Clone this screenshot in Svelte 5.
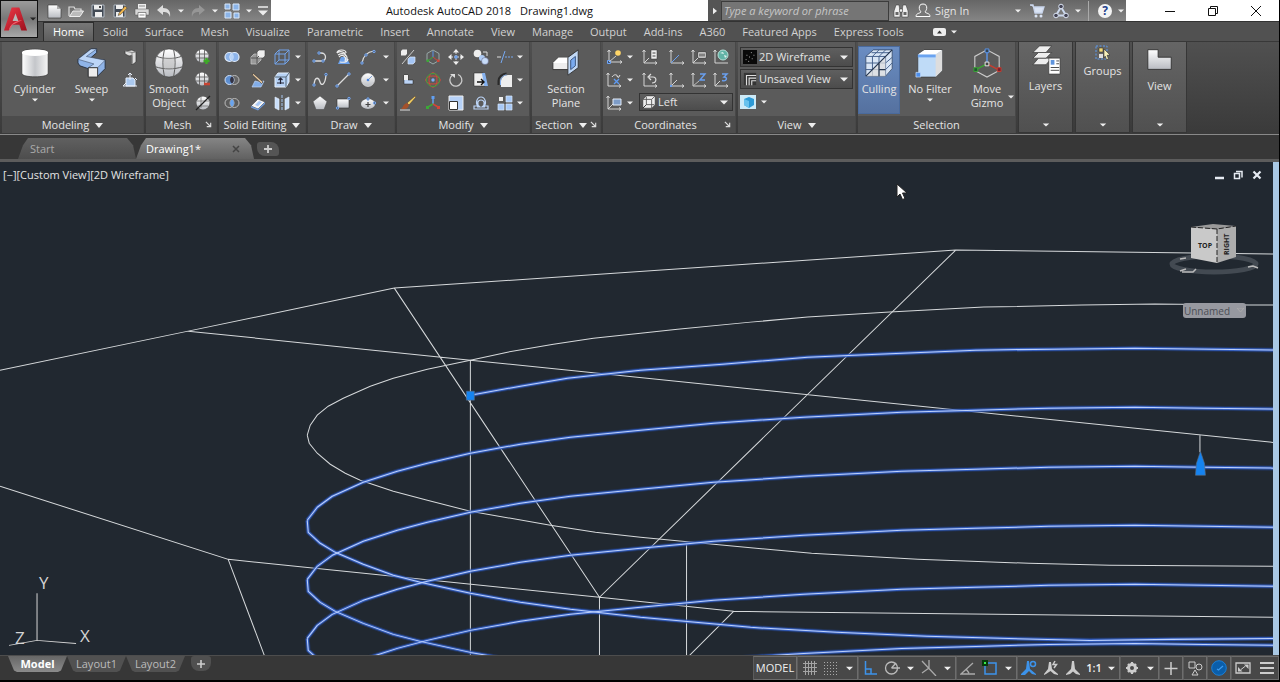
<script lang="ts">
	const glyphs: Record<string, string> = {
		// quick access
		new: '<path d="M2 2h9l4 4v9H2z" fill="url(#metal)" stroke="#333" stroke-width=".6"/><path d="M11 2v4h4" fill="#aaa"/>',
		open: '<path d="M1 13V4h5l1 2h6v2" fill="none" stroke="#ddd" stroke-width="1.2"/><path d="M1.500 13.500L5 8h10.500l-3.500 5.500z" fill="#bbb" stroke="#eee"/>',
		save: '<path d="M2 2h12v12H2z" fill="#424a55" stroke="#aeb6c0"/><path d="M4 2h8v4.500H4zM5 9h7v5H5z" fill="#eee"/><path d="M9 3h2v2H9z" fill="#444"/>',
		saveas: '<path d="M2 2h11v12H2z" fill="#424a55" stroke="#aeb6c0"/><path d="M4 2h7v4H4zM4 9h7v5H4z" fill="#eee"/><path d="M7 10l6-7 2.200 2-6.500 6.500-2.500 1z" fill="#edb34d" stroke="#333" stroke-width=".5"/>',
		plot: '<path d="M4 1h8v5H4z" fill="#eee"/><path d="M1 6h14v6H1z" fill="#d8d8d8" stroke="#555" stroke-width=".5"/><path d="M4 9.500h8V15H4z" fill="#fff" stroke="#666" stroke-width=".7"/><path d="M5 3h6M5.500 12h5" stroke="#888"/>',
		undo: '<path d="M1 7l6-5v3c5 0 8 3 7 9-1-4-3-5-7-5v3z" fill="#ddd"/>',
		redo: '<path d="M15 7L9 2v3c-5 0-8 3-7 9 1-4 3-5 7-5v3z" fill="#969696"/>',
		tiles: '<g fill="#8bb4e8" stroke="#d9e8fa"><path d="M1 1h5v5H1zM9 1h6v6H9zM1 9h6v6H1zM10 10h5v5h-5z"/></g>',
		more: '<path d="M3 4h10" stroke="#eee" stroke-width="1.500"/><path d="M3 7.500h10l-5 5z" fill="#eee"/>',
		find: '<g fill="#eee" stroke="#333" stroke-width=".5"><path d="M3 2h3l1 6v6H1V8zM10 2h3l2 6v6H9V8z"/><path d="M6.500 6h3v3h-3z"/></g><path d="M2.500 9h3v3h-3zM10.500 9h3v3h-3z" fill="#666"/>',
		user: '<path d="M8 1c3 0 4 2 3.700 4.500-.3 2-1.200 2.500-1.700 3.500 1 1.500 5 1 5 4.500H1C1 10 5 10.500 6 9c-.5-1-1.400-1.500-1.700-3.500C4 3 5 1 8 1z" fill="#777" stroke="#fff"/>',
		cart: '<path d="M1 2h3l2 8h7l2-6H4.500" fill="#dbe4f4" stroke="#c9d5ec" stroke-width="1.300"/><circle cx="7" cy="13" r="1.500" fill="#dbe4f4"/><circle cx="12" cy="13" r="1.500" fill="#dbe4f4"/>',
		a360: '<path d="M8 4L3 12.500h10z" fill="none" stroke="#cbd8ee" stroke-width="2"/><circle cx="8" cy="3.500" r="2.300" fill="#445" stroke="#dbe4f4"/><circle cx="3" cy="12.500" r="2.300" fill="#445" stroke="#dbe4f4"/><circle cx="13" cy="12.500" r="2.300" fill="#445" stroke="#dbe4f4"/>',
		// modeling and mesh
		polysolid: '<path d="M3 2l7-1 4 2v10l-4 3V6.500L7 7 3 5z" fill="#ddd" stroke="#333" stroke-width=".7"/><path d="M3 2l7 1.500L14 3M10 3.500V15" stroke="#888" fill="none"/>',
		presspull: '<path d="M4 6h7l2 2v6H4z" fill="#aac8ee" stroke="#e6eefa"/><path d="M8 8V1M6 3l2-2 2 2M1 14h14M1 14l3-3M13 6l2 2" stroke="#e8eefa" fill="none"/>',
		meshmore: '<circle cx="7" cy="7" r="6.500" fill="url(#metal)"/><path d="M1 5h12M1 9h12M4.500 1v12M9.500 1v12" stroke="#555" stroke-width=".8"/><path d="M11.500 9v6M8.500 12h6" stroke="#3dab27" stroke-width="2.400"/>',
		meshless: '<circle cx="7" cy="7" r="6.500" fill="url(#metal)"/><path d="M1 5h12M1 9h12M4.500 1v12M9.500 1v12" stroke="#555" stroke-width=".8"/><path d="M9 12h6" stroke="#c94432" stroke-width="2.600"/>',
		meshrefine: '<circle cx="8" cy="8" r="6.500" fill="url(#metal)"/><path d="M2 6h12M3 11h10M6 2v11" stroke="#777" stroke-width=".8"/><path d="M1 15L15 1" stroke="#222" stroke-width="1.300"/>',
		// solid editing
		union: '<g fill="#8db4ea" stroke="#e1ecfa" stroke-width="1.200"><circle cx="5.500" cy="8" r="4.500"/><circle cx="10.500" cy="8" r="4.500"/></g><path d="M8 4.300a4.500 4.500 0 0 1 0 7.400a4.500 4.500 0 0 1 0-7.400" fill="#b8d3f6"/>',
		subtract: '<circle cx="10.500" cy="8" r="4.500" fill="#666" stroke="#bbb"/><circle cx="5.500" cy="8" r="4.500" fill="#5d8ed0" stroke="#d2e2fa"/><path d="M8 4.300a4.500 4.500 0 0 0 0 7.400a4.500 4.500 0 0 0 0-7.400" fill="#334"/>',
		intersect: '<g fill="none" stroke="#bbb"><circle cx="5.500" cy="8" r="4.500"/><circle cx="10.500" cy="8" r="4.500"/></g><path d="M8 4.300a4.500 4.500 0 0 1 0 7.400a4.500 4.500 0 0 1 0-7.400" fill="#6aa4ee"/>',
		slicebox: '<path d="M1 8l3-3h7v6l-4 4H1z" fill="#999" stroke="#ccc" stroke-width=".7"/><path d="M7 3l2-2h6v6l-2 2H7z" fill="#eee" stroke="#444" stroke-width=".6"/><path d="M1 9h6v6M7 9l2-2" stroke="#555" fill="none"/>',
		knife: '<path d="M2 15l3-6 4 1 5-1-3 6z" fill="#82ade8" stroke="#bed6f6" stroke-width=".7"/><path d="M3 1l10 9-1.500 1.500L2.500 3z" fill="#e8c9a0" stroke="#333" stroke-width=".6"/>',
		thicken: '<path d="M1 11l7-7 7 3-7 7z" fill="#f4f4f4" stroke="#444" stroke-width=".6"/><path d="M1 11l7 3 7-7v2l-7 6.500-7-3z" fill="#6c9bdd"/><path d="M5 10l4-4 3 1.300-4 4z" fill="#a9c9f5"/>',
		wirebox: '<g fill="none" stroke="#72a3ea"><path d="M1 5h10v10H1zM5 1h10v10H5zM1 5l4-4M11 5l4-4M1 15l4-4M11 15l4-4"/></g>',
		extrudeface: '<path d="M1 5l3-4h11v9l-3 5H1z" fill="#b7d2f5" stroke="#e6f0fc"/><path d="M1 5h11v10M12 5l3-4" fill="none" stroke="#567"/><path d="M6.500 12V6M4.500 8l2-2 2 2M3 11h7" stroke="#223" fill="none" stroke-width="1.200"/>',
		separate: '<path d="M1 2l4 2v11l-4-2zM15 2l-4 2v11l4-2z" fill="#c9defa" stroke="#e9f1fc" stroke-width=".6"/><path d="M8 0v16" stroke="#a8c8f2" stroke-dasharray="3 1"/>',
		// draw
		polyline: '<path d="M1 12h8c6 0 6-8 0-8H7" fill="none" stroke="#ddd" stroke-width="1.300"/><g class="node"><circle cx="2" cy="12" r="1.200"/><circle cx="7" cy="4" r="1.200"/><circle cx="11" cy="12" r="1.200"/></g>',
		helix: '<path d="M3 15l3-7h5l4 7z" fill="#6ca2ec"/><path d="M2 4c0-4 9-4 9 0M2 4c4-3 10 0 8 3M4 8c4-4 8 1 6 4M3 6c5-3 10-1 9 6M5 13c6 1 8-1 8-3" fill="none" stroke="#eee" stroke-width="1.200"/>',
		arc: '<path d="M2 14C3 7 7 3 14 2" fill="none" stroke="#ddd" stroke-width="1.200"/><g class="node"><circle cx="2" cy="14" r="1.200"/><circle cx="6" cy="6" r="1.200"/><circle cx="14" cy="2.500" r="1.200"/></g>',
		spline: '<path d="M2 13c1-10 5-7 6-3s5 4 6-7" fill="none" stroke="#ddd" stroke-width="1.300"/><g class="node"><circle cx="2" cy="13" r="1.200"/><circle cx="14" cy="2.500" r="1.200"/></g>',
		line: '<path d="M2 14L14 2" stroke="#ddd" stroke-width="1.300"/><g class="node"><circle cx="2" cy="14" r="1.200"/><circle cx="14" cy="2" r="1.200"/></g>',
		circle: '<circle cx="8" cy="8" r="6.500" fill="url(#metal)" stroke="#eee" stroke-width=".6"/><path d="M8 8l4-4" stroke="#7e9dcf"/><circle cx="8" cy="8" r="1.300" fill="#4d87e0"/>',
		polygon: '<path d="M8 1l7 5.500-3 8H4l-3-8z" fill="url(#metal)" stroke="#444" stroke-width=".5"/>',
		rect: '<path d="M2 4h12v9H2z" fill="url(#metal)" stroke="#333" stroke-width=".6"/><g class="node"><circle cx="14" cy="3.500" r="1.200"/><circle cx="2.500" cy="13" r="1.200"/></g>',
		ellipse: '<ellipse cx="8" cy="9" rx="7" ry="5" fill="url(#metal)"/><path d="M8 7v5M5.500 9.500h5" stroke="#444" stroke-width="1.200"/><g class="node"><circle cx="8" cy="4" r="1.200"/><circle cx="14.500" cy="8" r="1.200"/></g>',
		// modify
		convert: '<path d="M1 2l1.500-1.500H7V5L5.500 6.500H1z" fill="#eee"/><path d="M14 1L2 15" stroke="#ccc"/><path d="M8 10l2-2h5v5l-2 2H8z" fill="#a4c5f5" stroke="#dce9fc" stroke-width=".7"/>',
		gizmomove: '<path d="M8 1l6 3.500v7L8 15l-6-3.500v-7z" fill="none" stroke="#9aa"/><path d="M8 8V2" stroke="#5b94e8"/><path d="M8 8l-5 4" stroke="#3da838"/><path d="M8 8l5 4" stroke="#d14739"/><path d="M1.500 10.500h2.500V13H1.500z" fill="#3da838"/><path d="M12 10.500h2.500V13H12z" fill="#d14739"/>',
		move: '<path d="M8 0l3 3.500H5zM8 16l3-3.500H5zM0 8l3.500-3v6zM16 8l-3.500-3v6z" fill="#eee"/><path d="M8 3v10M3 8h10" stroke="#ddd" stroke-dasharray="2 1"/><path d="M6.500 6.500h3v3h-3z" fill="#6ca0ec"/>',
		copy: '<circle cx="4.500" cy="4.500" r="3.800" fill="#eee"/><circle cx="9" cy="9" r="3" fill="#aecbf5"/><circle cx="12" cy="12" r="3.500" fill="#c7dcf9" stroke="#557" stroke-width=".5"/><path d="M10 3h4v4" fill="none" stroke="#ddd"/>',
		trim: '<path d="M0 8h4" stroke="#ddd"/><path d="M4 14L8 2" stroke="#76a8f0"/><path d="M8 8h8" stroke="#76a8f0" stroke-dasharray="2 1"/>',
		align: '<path d="M4 3h4v5h5v4H4z" fill="#bcd4f6" stroke="#222" stroke-width=".5"/><path d="M4 3h4v5H4z" fill="#eee"/>',
		gizmorotate: '<ellipse cx="8" cy="8" rx="7.300" ry="4" fill="none" stroke="#cf4a3b"/><ellipse cx="8" cy="8" rx="4" ry="7.300" fill="none" stroke="#cf4a3b"/><circle cx="8" cy="8" r="6.500" fill="none" stroke="#40a23c"/><circle cx="8" cy="8" r="1.700" fill="#7daff5"/>',
		rotate: '<path d="M4 3.500a6 6 0 1 0 6-1" fill="none" stroke="#ccc" stroke-width="1.300"/><path d="M2 2h5v4z" fill="#ddd"/>',
		stretch: '<path d="M1 1h9l2 13H1z" fill="#eee" stroke="#222" stroke-width=".5"/><path d="M9 1h3l3 13h-4z" fill="#86b2ef"/><path d="M4 10h7M8 7l3 3-3 3" stroke="#111" fill="none" stroke-width="1.400"/>',
		fillet: '<path d="M4 15V9c0-3 3-6 7-6h4v12z" fill="#eee"/><path d="M1.500 13V9c0-4 4-7.500 8-7.500" fill="none" stroke="#2a2a2a" stroke-width="2"/><path d="M3.500 13V9c0-3 3-6 6-6" fill="none" stroke="#86b2ef"/>',
		brush: '<path d="M15 1L7 8l2 2 7-8z" fill="#f3cf61" stroke="#433" stroke-width=".5"/><path d="M7 8l2 2c-1 4-4 5-8 4 2-1 2-5 6-6z" fill="#a5512b"/><path d="M0 15h10" stroke="#ddd"/>',
		gizmoscale: '<path d="M8 9V2" stroke="#62a0f2" stroke-width="1.500"/><path d="M8 9l-5 3" stroke="#3da838" stroke-width="1.500"/><path d="M8 9l5 3" stroke="#d14739" stroke-width="1.500"/><path d="M6.500 1h3v3h-3z" fill="#62a0f2"/><path d="M1 11h3v3H1z" fill="#3da838"/><path d="M12 11h3v3h-3z" fill="#d14739"/>',
		scale: '<path d="M1 1h14v14H1z" fill="#b6d1f7" stroke="#eee"/><path d="M1.500 6.500h8v8h-8z" fill="#fff" stroke="#333"/>',
		offset: '<path d="M1 14h14v-3h-4c3-3 1-9-3-9s-6 6-3 9H1zM4 12h3c-4-3-2-7 1-7s5 4 1 7h3" fill="none" stroke="#bcd4f6" stroke-width="1.200"/>',
		array: '<g fill="#a7c8f6" stroke="#d9e8fb" stroke-width=".7"><path d="M9 1h6v6H9zM1 9h6v6H1zM9 9h6v6H9z"/></g><path d="M2 2h4v4H2z" fill="#eee"/>',
		// coordinates
		ucs: '<path class="axes" d="M3 1v12h13M1.500 3L3 1l1.500 2M14 11.500L16 13l-2 1.500"/><path d="M1.500 11.500h3v3h-3z" fill="#38527c" stroke="#6fa5f5"/><path d="M3 13l7-6" stroke="#ccc"/><circle cx="12" cy="4" r="2.800" fill="#ffd567"/>',
		ucsnamed: '<path class="axes" d="M2 1v13h13M13 12.500l2 1.500-2 1.500M.5 3L2 1l1.500 2M2 14l5-5"/><path d="M9 1h6v9H9z" fill="#eee" stroke="#333" stroke-width=".5"/><path d="M10.500 4h3M10.500 7h3" stroke="#444"/>',
		ucsworld: '<path class="axes" d="M2 1v13h13M13 12.500l2 1.500-2 1.500M.5 3L2 1l1.500 2"/><path d="M2 14l8-8" stroke="#6aa0f0"/>',
		ucsobject: '<path class="axes" d="M2 1v13h13M13 12.500l2 1.500-2 1.500M.5 3L2 1l1.500 2M2 14l5-5"/><path d="M7 3h8v6H7z" fill="#eee" stroke="#333" stroke-width=".5"/><path d="M9 4v4M11 4v4M13 4v4M8 6h6" stroke="#444" stroke-width=".8"/>',
		ucsglobe: '<path class="axes" d="M2 1v13h13M.5 3L2 1l1.500 2"/><circle cx="10" cy="6" r="5" fill="#62b3a6" stroke="#b5e0d8"/><path d="M7 4l3-1 1 2zM11 6l3 1-2 2z" fill="#dff3ef"/>',
		ucsx: '<path class="axes" d="M2 1v13h13M13 12.500l2 1.500-2 1.500M.5 3L2 1l1.500 2"/><path d="M6 5c2-3 5-3 6 0M10.500 4l2 1.500L14 3" stroke="#ddd" fill="none"/><path d="M8 7l5 5M13 7l-5 5" stroke="#5e9bf2" stroke-width="1.300"/>',
		ucsback: '<path class="axes" d="M2 1v13h13M13 12.500l2 1.500-2 1.500M.5 3L2 1l1.500 2"/><path d="M7 5h4c4 0 4 6-1 6M9 2L6 5l3 3" stroke="#ddd" fill="none" stroke-width="1.200"/>',
		ucsorigin: '<path class="axes" d="M2 1v13h13M13 12.500l2 1.500-2 1.500M.5 3L2 1l1.500 2M2 14l6-6"/><path d="M1 13h2v2H1z" fill="#6aa0f0"/>',
		ucsz: '<path class="axes" d="M2 1v13h13M13 12.500l2 1.500-2 1.500M.5 3L2 1l1.500 2"/><path d="M9 2h5L9 8h5" stroke="#6aa0f0" fill="none" stroke-width="1.400"/><path d="M2 14l6-5" stroke="#bbb"/>',
		ucs3: '<path class="axes" d="M2 1v13h13M13 12.500l2 1.500-2 1.500M.5 3L2 1l1.500 2M2 14l5-5"/><path d="M9 2h5l-3 3c4 0 3 5-2 3.500" stroke="#6aa0f0" fill="none" stroke-width="1.400"/>',
		ucsview: '<path class="axes" d="M2 1v13h13M13 12.500l2 1.500-2 1.500M.5 3L2 1l1.500 2M2 14l5-5"/><path d="M7 4h8v6H7z" fill="#7d9cc8" stroke="#e6eefa"/>',
		leftface: '<path d="M1 5l4-4h10v10l-4 4H1z" fill="#eee" stroke="#222" stroke-width=".5"/><path d="M1 5h10v10M11 5l4-4" fill="none" stroke="#555"/><path d="M5 2v9h9" stroke="#555" fill="none"/><path d="M1 15l4-4" stroke="#222"/>',
		wireframe: '<path d="M0 0h16v16H0z" fill="#090909"/><path d="M9 3h1M4 6h1M7 8h1M10 10h1M6 13h1M3 11h1M12 6h1" stroke="#ccc"/>',
		viewport: '<path d="M1 1h14v14H1z" fill="#353535"/><path d="M4 15V4h11M7 15V7h8M10 15v-5h5" fill="none" stroke="#ddd" stroke-width="1.300"/>',
		viewbox: '<path d="M0 1h16v14H0z" fill="#cceaf8"/><path d="M4 5l5-2 5 2v6l-5 3-5-3z" fill="#2c9ad6"/><path d="M4 5l5 2v7l-5-3z" fill="#67c2ee"/>',
		groups: '<path d="M1 1h11v13H1z" fill="none" stroke="#5c9bee" stroke-dasharray="2 1.500"/><path d="M4 3h4v4H4z" fill="#f2d976" stroke="#222" stroke-width=".5"/><path d="M4 9h4v4H4z" fill="#ddd"/><path d="M9 4l6 6-3 .3 1.500 3.500-2 .8-1.300-3.500L9 13z" fill="#f7f0ba" stroke="#222" stroke-width=".5"/>',
		// status bar
		grid: '<path d="M4.500 1v14M7.500 1v14M10.500 1v14M13.500 1v14M2 3.500h14M2 7.500h14M2 11.500h14" stroke="#a4a4a4"/>',
		snap: '<g stroke="#aaa" stroke-dasharray="1 2"><path d="M1 2.500h14M1 5.500h14M1 8.500h14M1 11.500h14M1 14.500h14"/></g>',
		ortho: '<path d="M3.500 1v13H15M3.500 9H9v5" fill="none" stroke="#3d93ea" stroke-width="1.500"/>',
		polar: '<circle cx="7.500" cy="8" r="6" fill="none" stroke="#bbb" stroke-width="1.300"/><path d="M7.500 8H16M7.500 8L12 3" stroke="#bbb" stroke-width="1.300"/>',
		iso: '<path d="M1 1l14 15M8 0v8M8 8L1 13" stroke="#aaa" fill="none" stroke-width="1.300"/>',
		track: '<path d="M15 14H1L13 3M6 9l3 4" stroke="#aaa" fill="none" stroke-width="1.300"/>',
		osnap: '<path d="M3 3h11v11H3z" fill="none" stroke="#3d93ea" stroke-width="1.500"/><path d="M0 0h6v6H0z" fill="#073a0b"/><path d="M2 2h2v2H2z" fill="#3cea4a"/>',
		annoblue: '<path d="M6 1h2l1 8 6 5v1l-4-1-3-3-4 4H0v-1l5-5z" fill="#3d93ea"/><circle cx="12" cy="4" r="2.500" fill="none" stroke="#3d93ea" stroke-width="1.500"/>',
		annoauto: '<path d="M6 2h2l1 7 6 5v1l-4-1-3.500-3L3 14l-2 1v-1l4-5z" fill="#ccc"/><path d="M12 1l-2 3.500h3.500L11 8" stroke="#ccc" fill="none" stroke-width="1.500"/>',
		anno: '<path d="M7 1h2l1 8 5 5v1l-4-1-3-2.500L5 14l-4 1v-1l5-5z" fill="#ccc"/>',
		gear: '<circle cx="8" cy="8" r="3.500" fill="none" stroke="#ccc" stroke-width="3"/><path d="M8 2v2M8 12v2M2 8h2M12 8h2M4 4l1 1M11 11l1 1M12 4l-1 1M4 12l1-1" stroke="#ccc" stroke-width="2.200"/>',
		plus: '<path d="M8 2v13M1.500 8.500h13" stroke="#ccc" stroke-width="1.500"/>',
		isolate: '<path d="M2 2h6v6H2zM5 15l3-5 3 5z" fill="none" stroke="#ccc"/><circle cx="12" cy="7" r="3" fill="none" stroke="#ccc"/>',
		perf: '<circle cx="8" cy="8" r="7.300" fill="#0a5eaa" stroke="#1b7fd6"/><path d="M6 9l1.500 1L12 6" stroke="#3d9cf0" fill="none" stroke-width="1.200"/>',
		clean: '<path d="M1 3h14v10H1z" fill="none" stroke="#ccc" stroke-width="1.300"/><path d="M9 4.500h4.500V9zM3 7v4.500h4.500z" fill="#ccc"/><path d="M6 9.500L10.500 6" stroke="#ccc"/>',
		menu: '<path d="M1 3h14M1 8h14M1 13h14" stroke="#ccc" stroke-width="1.800"/>',
	};

	const large: Record<string, string> = {
		cylinder: '<path d="M2 5c0-5 28-5 28 0v22c0 5-28 5-28 0z" fill="url(#tube)" stroke="#333" stroke-width=".7"/><ellipse cx="16" cy="5" rx="14" ry="3.500" fill="#fff"/>',
		sweep: '<path d="M1 12L15 1h6v4l-7 6 16 2v9l-8 8H12v-8l-9-3-2-3z" fill="#8fb4e8" stroke="#26303e"/><path d="M1 12L15 1h6L10 9l20 4-8 8H12l6-4z" fill="#bcd5f7" stroke="#3a4a62" stroke-width=".6"/><path d="M12 21h10v10H12z" fill="#eee" stroke="#333"/>',
		smooth: '<circle cx="16" cy="16" r="15" fill="url(#metal)" stroke="#333" stroke-width=".6"/><path d="M3 9c8 3 18 3 26 0M1.500 20c9 3 20 3 29 0M11 2c-2 9-2 18 0 28M21 2c2 9 2 18 0 28" fill="none" stroke="#555"/><path d="M10 10h12v12H10z" fill="#bbb" opacity=".5"/>',
		section: '<path d="M2 16l6-6h15v13H2z" fill="#eee" stroke="#333"/><path d="M8 10h15l-5 6H2z" fill="#fff"/><path d="M18 10L29 2v19l-11 8z" fill="#c1d8f5" stroke="#333"/><path d="M21 13l5-4v10l-5 4z" fill="#7aabf0" stroke="#38527c"/>',
		culling: '<path d="M2 9l8-7h20v20l-7 8H2z" fill="#d9e6f6" stroke="#26364f" stroke-width=".7"/><path d="M2 9h21v21M23 9l7-7M9 9v21M16 9v21M2 16h21M2 23h21M8 5h19M23 16l7-6M23 23l7-7M16 2L9 9M23 2l-7 7" fill="none" stroke="#3f5c88"/><path d="M2 30L23 9v21z" fill="#ddd" opacity=".75"/><path d="M2 30L30 2M16 16v14M16 23h7" stroke="#26364f" fill="none" stroke-width="1.300"/>',
		filter: '<path d="M3 7l7-5h19v22l-7 7H3z" fill="#bfdbf7" stroke="#333" stroke-width=".7"/><path d="M3 7l7-5h19l-7 5z" fill="#fff"/><path d="M22 7l7-5v22l-7 7z" fill="#ddd"/><path d="M3 8.500h19" stroke="#6aa3f0" stroke-width="3"/><path d="M1 26h5v5H1z" fill="#4d8eea" stroke="#cfe2fb" stroke-width=".7"/>',
		gizmo: '<path d="M16 2l13 7v15l-13 7L3 24V9z" fill="none" stroke="#ccc" stroke-width="1.200"/><path d="M16 17V4" stroke="#5c96ec" stroke-width="1.500"/><path d="M16 17L4 23" stroke="#38a631" stroke-width="1.500"/><path d="M16 17l12 6" stroke="#c83c2e" stroke-width="1.500"/><path d="M14 1h4v4h-4z" fill="#345" stroke="#5c96ec"/><path d="M2 21h4v4H2z" fill="#253" stroke="#38a631"/><path d="M27 21h4v4h-4z" fill="#723" stroke="#c83c2e"/><path d="M14 15h4v4h-4z" fill="#444" stroke="#eee"/>',
		layers: '<g fill="#eee" stroke="#333" stroke-width=".7"><path d="M2 21l6-7h14l-6 7z"/><path d="M2 14l6-6h14l-6 6z"/><path d="M2 8l7-7h13l-6 7z"/><path d="M19 14h12v17H19z" fill="#fff"/></g><path d="M21 16h4v5h-4z" fill="#5f94dc"/><path d="M27 17h3M27 20h3M21 24h9M21 27h9" stroke="#444"/>',
		base: '<path d="M3 5h11v8h14v13H3z" fill="url(#metal)" stroke="#333"/>',
	};

	const menuTabs = ['Home', 'Solid', 'Surface', 'Mesh', 'Visualize', 'Parametric', 'Insert', 'Annotate', 'View', 'Manage', 'Output', 'Add-ins', 'A360', 'Featured Apps', 'Express Tools'];
	const quick = ['new', 'open', 'save', 'saveas', 'plot', 'undo', 'v', 'redo', 'v', 'tiles', 'v', 'more'];

	const solidTools = ['union', 'slicebox', 'wirebox', 'v', 'subtract', 'knife', 'extrudeface', 'v', 'intersect', 'thicken', 'separate', 'v'];
	const drawTools = ['polyline', 'helix', 'arc', 'v', 'spline', 'line', 'circle', 'v', 'polygon', 'rect', 'ellipse', 'v'];
	const modifyTools = ['convert', 'gizmomove', 'move', 'copy', 'trim', 'v', 'align', 'gizmorotate', 'rotate', 'stretch', 'fillet', 'v', 'brush', 'gizmoscale', 'scale', 'offset', 'array', 'v'];
	const ucsTools = ['ucs', 'v', 'ucsnamed', 'ucsworld', 'ucsobject', 'ucsglobe', 'ucsx', 'v', 'ucsback', 'ucsorigin', 'ucsz', 'ucs3', 'ucsview', 'v'];

	const statusGroups = [
		['grid', 'snap', 'v'],
		['ortho', 'polar', 'v', 'iso', 'v'],
		['track', 'osnap', 'v'],
		['annoblue', 'annoauto', 'anno', '1:1', 'v'],
		['gear', 'v'],
		['plus'],
		['isolate'],
		['perf'],
		['clean', 'menu'],
	];

	// one turn of the helix, repeated downwards by its pitch
	const pitch = 59;
	const turns = [0, 1, 2, 3, 4];
	const back = '307,520 317,507 332,496 363,482 397,471 427,463 470,453 520,444 570,437 640,430 713,423 803,417 901,412 975,410 1048,408 1134,407 1203,408 1280,409';
	const front = '307,520 308,532 320,543 335,552 363,564 393,575 420,582 470,593 520,602 570,609 640,617 750,627 836,632 926,636 999,638 1089,640 1171,639 1280,638';
	const start = '470,395 520,386 567,378 640,370 722,364 807,357 877,354 975,350 1052,349 1134,348 1211,349 1280,350';

	let ucs = $state('Left');
	let style = $state('2D Wireframe');
	let view = $state('Unsaved View');
</script>

{#snippet caret()}
	<svg class="caret" viewBox="0 0 8 5" aria-hidden="true"><path d="M0 .5h8L4 4.500z" fill="#eee" /></svg>
{/snippet}

{#snippet icon(name: string)}
	<svg class="icon" viewBox="0 0 16 16" aria-hidden="true">{@html glyphs[name]}</svg>
{/snippet}

{#snippet tool(name: string)}
	{#if name === 'v'}
		<button class="drop" aria-label="More">{@render caret()}</button>
	{:else}
		<button class="tool" aria-label={name}>{@render icon(name)}</button>
	{/if}
{/snippet}

{#snippet big(name: string, label: string, drop: boolean)}
	<button class="big">
		<svg viewBox="0 0 32 32" aria-hidden="true">{@html large[name]}</svg>
		<span>{label}</span>
		{#if drop}{@render caret()}{/if}
	</button>
{/snippet}

{#snippet title(text: string, drop: boolean, launcher: boolean)}
	<div class="title">
		<span class="name">{text}{#if drop}<svg class="mark" viewBox="0 0 8 5"><path d="M0 0h8L4 5z" fill="#eee" /></svg>{/if}</span>
		{#if launcher}
			<svg class="launch" viewBox="0 0 8 8"><path d="M1 1l5 5M6.500 2v4.500H2" fill="none" stroke="#ddd" stroke-width="1.300" /></svg>
		{/if}
	</div>
{/snippet}

<svg class="defs" aria-hidden="true">
	<defs>
		<linearGradient id="metal" x1="0" y1="0" x2="0" y2="1"><stop offset="0" stop-color="#fff" /><stop offset="1" stop-color="#b9bcc2" /></linearGradient>
		<linearGradient id="tube"><stop offset="0" stop-color="#fff" /><stop offset=".5" stop-color="#c4c6ca" /><stop offset="1" stop-color="#f6f6f6" /></linearGradient>
		<linearGradient id="red" x1="0" y1="0" x2="1" y2="1"><stop offset="0" stop-color="#ee3a48" /><stop offset="1" stop-color="#9c0f1c" /></linearGradient>
	</defs>
</svg>

<div class="app">
	<header>
		<button class="brand" aria-label="Application menu">
			<svg viewBox="0 0 26 28"><path d="M1 26L9 2h8l8 24h-6l-2-6H9l-3 6z" fill="url(#red)" /><path d="M13 8l3 8h-6z" fill="#b9b9b9" /><path d="M6 26c1-6 6-10 14-11l-10 5z" fill="#f2606b" /></svg>
			{@render caret()}
		</button>
		<div class="top">
			<div class="titlebar">
				<div class="quick">
					{#each quick as name}{@render tool(name)}{/each}
				</div>
				<h1><span>Autodesk AutoCAD 2018</span><span>Drawing1.dwg</span></h1>
				<div class="info">
					<button class="fold" aria-label="Collapse search"><svg viewBox="0 0 5 8"><path d="M0 0l5 4-5 4z" fill="#eee" /></svg></button>
					<input type="search" aria-label="Search help" placeholder="Type a keyword or phrase" />
					{@render tool('find')}
					<button class="signin">{@render icon('user')}<span>Sign In</span>{@render caret()}</button>
					{@render tool('cart')}
					{@render tool('a360')}
					{@render tool('v')}
					<i></i>
					<button class="help" aria-label="Help"><b>?</b></button>
					{@render tool('v')}
				</div>
				<div class="window">
					<button aria-label="Minimize"><svg viewBox="0 0 12 12"><path d="M1 6.500h10" /></svg></button>
					<button aria-label="Restore"><svg viewBox="0 0 12 12"><path d="M1.500 3.500h7v7h-7zM3.500 3.500v-2h7v7h-2" /></svg></button>
					<button aria-label="Close"><svg viewBox="0 0 12 12"><path d="M1 1l10 10M11 1L1 11" /></svg></button>
				</div>
			</div>
			<nav>
				{#each menuTabs as tab, i}
					<button class:active={i === 0}>{tab}</button>
				{/each}
				<button class="collapse" aria-label="Minimize ribbon"><svg viewBox="0 0 13 8"><rect width="13" height="8" rx="2" fill="#eee" /><path d="M4 5.500h5l-2.500-3z" fill="#333" /></svg>{@render caret()}</button>
			</nav>
		</div>
	</header>

	<div class="ribbon">
		<section class="panel modeling">
			<div class="body">
				{@render big('cylinder', 'Cylinder', true)}
				{@render big('sweep', 'Sweep', true)}
				<div class="stack">{@render tool('polysolid')}{@render tool('presspull')}</div>
			</div>
			{@render title('Modeling', true, false)}
		</section>
		<section class="panel mesh">
			<div class="body">
				{@render big('smooth', 'Smooth Object', false)}
				<div class="stack">{@render tool('meshmore')}{@render tool('meshless')}{@render tool('meshrefine')}</div>
			</div>
			{@render title('Mesh', false, true)}
		</section>
		<section class="panel solid">
			<div class="body tools">{#each solidTools as name}{@render tool(name)}{/each}</div>
			{@render title('Solid Editing', true, false)}
		</section>
		<section class="panel draw">
			<div class="body tools">{#each drawTools as name}{@render tool(name)}{/each}</div>
			{@render title('Draw', true, false)}
		</section>
		<section class="panel modify">
			<div class="body tools">{#each modifyTools as name}{@render tool(name)}{/each}</div>
			{@render title('Modify', true, false)}
		</section>
		<section class="panel section">
			<div class="body">{@render big('section', 'Section Plane', false)}</div>
			{@render title('Section', true, true)}
		</section>
		<section class="panel coords">
			<div class="body tools">
				{#each ucsTools as name}{@render tool(name)}{/each}
				<label class="pick">
					{@render icon('leftface')}
					<select bind:value={ucs} aria-label="UCS"><option>Left</option><option>Top</option><option>Front</option></select>
					{@render caret()}
				</label>
			</div>
			{@render title('Coordinates', false, true)}
		</section>
		<section class="panel views">
			<div class="body">
				<label class="pick">
					{@render icon('wireframe')}
					<select bind:value={style} aria-label="Visual style"><option>2D Wireframe</option><option>Realistic</option></select>
					{@render caret()}
				</label>
				<label class="pick">
					{@render icon('viewport')}
					<select bind:value={view} aria-label="Saved view"><option>Unsaved View</option><option>Top</option></select>
					{@render caret()}
				</label>
				<div class="line">{@render tool('viewbox')}{@render tool('v')}</div>
			</div>
			{@render title('View', true, false)}
		</section>
		<section class="panel selection">
			<div class="body">
				{@render big('culling', 'Culling', false)}
				{@render big('filter', 'No Filter', true)}
				{@render big('gizmo', 'Move Gizmo', true)}
			</div>
			{@render title('Selection', false, false)}
		</section>
		<button class="closed">
			<svg class="pic" viewBox="0 0 32 32">{@html large.layers}</svg><span>Layers</span>{@render caret()}
		</button>
		<button class="closed">
			{@render icon('groups')}<span>Groups</span>{@render caret()}
		</button>
		<button class="closed">
			<svg class="pic" viewBox="0 0 32 32">{@html large.base}</svg><span>View</span>{@render caret()}
		</button>
	</div>

	<div class="files">
		<button class="file">Start</button>
		<button class="file current"><span>Drawing1*</span><svg viewBox="0 0 8 8"><path d="M1 1l6 6M7 1L1 7" stroke="#444" stroke-width="1.500" /></svg></button>
		<button class="add" aria-label="New drawing"><svg viewBox="0 0 8 8"><path d="M4 0v8M0 4h8" stroke="#ccc" stroke-width="1.800" /></svg></button>
	</div>

	<main>
		<svg class="model" viewBox="0 162 1272 493" preserveAspectRatio="xMinYMin slice">
			<g class="edge">
				<path d="M0 370L188 331 394 288 955 250 1280 254M188 331L470 360 1280 443M394 288L599 597 955 250M599 597V660M470 360V660M0 486L228 559 266 660M228 559L599 597 733 611 1280 617M733 611L684 660M686 543V660M1199 435v17" />
				<polyline points="307,435 310,425 317,415 328,406 343,398 370,386 393,378 427,369 470,360 507,352 553,344 593,338 640,333 677,329 750,322 807,317 889,312 983,307 1081,305 1154,304 1248,305 1280,305" />
				<polyline points="307,435 309,443 317,453 330,464 345,473 360,480 393,491 427,500 470,511 550,525 595,532 640,537 713,544 811,553 917,559 1028,563 1109,565 1280,566" />
			</g>
			{#each ['halo', 'glow', 'core'] as layer}
				<g class={layer}>
					<polyline points={start} />
					{#each turns as n}
						<g transform="translate(0 {n * pitch})">
							<polyline points={back} />
							<polyline points={front} />
						</g>
					{/each}
				</g>
			{/each}
			<g fill="#1583f0" stroke="#5d6b80" stroke-width=".6">
				<path d="M466 391h8v9h-8z" />
				<path d="M1199.500 451l4 12 1 12h-10l1-12z" />
			</g>
			<g class="ucs">
				<path d="M37 593v47l39 3M37 640l-28 5" />
				<text x="39" y="589">Y</text>
				<text x="80" y="642">X</text>
				<text x="15" y="644">Z</text>
			</g>
		</svg>
		<div class="overlay">
			<div class="viewlabel"><button>[−]</button><button>[Custom View]</button><button>[2D Wireframe]</button></div>
			<div class="mdi">
				<button aria-label="Minimize drawing"><svg viewBox="0 0 10 10"><path d="M1 8h9" stroke-width="2.500" /></svg></button>
				<button aria-label="Restore drawing"><svg viewBox="0 0 10 10"><path d="M1.500 3.500h5v5h-5zM3 1.500h6v6" stroke-width="1.500" /></svg></button>
				<button aria-label="Close drawing"><svg viewBox="0 0 10 10"><path d="M1.500 1.500l7 7M8.500 1.500l-7 7" stroke-width="2.200" /></svg></button>
			</div>
		</div>
		<div class="compass">
			<svg viewBox="0 0 92 56">
				<ellipse cx="46" cy="41" rx="42" ry="8" fill="none" stroke="#434a52" stroke-width="5" />
				<path d="M23 4l26 2v34l-26-5z" fill="#c9c9c9" />
				<path d="M49 6l19-3v31L49 40z" fill="#adadad" />
				<path d="M23 4l22-3 23 2-19 3z" fill="#999" />
				<path d="M23 4l26 2 19-3M49 6v34" fill="none" stroke="#222" stroke-dasharray="5 2" />
				<path d="M12 48l6-2M14 49l11 0 3-3M80 44l5-1 5 2M12 36l6-1" fill="none" stroke="#bbb" stroke-width="1.500" />
				<text x="30" y="25">TOP</text>
				<text class="side" transform="translate(61 32) rotate(-90)">RIGHT</text>
			</svg>
			<button>Unnamed<svg viewBox="0 0 7 5"><path d="M0 0h7L3.500 4z" fill="none" stroke="#aaa" /></svg></button>
		</div>
		<svg class="pointer" viewBox="0 0 12 18" aria-hidden="true"><path d="M1 1v13l3-3 2.500 5.500 2.500-1L6.500 10H11z" fill="#fff" stroke="#222" /></svg>
	</main>

	<footer>
		<div class="layouts">
			<button class="sheet current">Model</button>
			<button class="sheet">Layout1</button>
			<button class="sheet">Layout2</button>
			<button class="add" aria-label="New layout"><svg viewBox="0 0 8 8"><path d="M4 0v8M0 4h8" stroke="#ccc" stroke-width="1.600" /></svg></button>
		</div>
		<div class="status">
			<button class="mode">MODEL</button>
			{#each statusGroups as group}
				<div class="group">
					{#each group as name}
						{#if name === '1:1'}
							<button class="ratio">1:1</button>
						{:else}
							{@render tool(name)}
						{/if}
					{/each}
				</div>
			{/each}
		</div>
	</footer>
</div>

<style>
	:global(body) {
		margin: 0;
		background: #000;
	}
	.app {
		display: flex;
		flex-direction: column;
		height: 100vh;
		box-sizing: border-box;
		padding: 0 1px 2px 0;
		overflow: hidden;
		background: #000;
		color: #e4e4e4;
		font: 11px/14px 'Open Sans', 'Noto Sans', sans-serif;
	}
	.defs {
		position: absolute;
		width: 0;
		height: 0;
	}
	button,
	input,
	select {
		font: inherit;
		color: inherit;
		margin: 0;
		padding: 0;
		border: 0;
		background: none;
	}
	button {
		display: flex;
		align-items: center;
		justify-content: center;
		white-space: nowrap;
	}
	.icon {
		display: block;
		flex: none;
		width: 16px;
		height: 16px;
	}
	.icon :global(.node) {
		fill: #4a5f80;
		stroke: #7aabf2;
		stroke-width: 1px;
	}
	.icon :global(.axes) {
		fill: none;
		stroke: #d4d4d4;
		stroke-width: 1px;
	}
	.caret {
		display: block;
		flex: none;
		width: 6px;
		height: 4px;
	}

	/* title bar and menu tabs */
	header {
		display: flex;
		flex: none;
		background: #515151;
	}
	.brand {
		align-self: flex-start;
		gap: 2px;
		width: 38px;
		height: 38px;
		box-sizing: border-box;
		border: 1px solid #111;
		background: linear-gradient(#9b9b9b, #777 50%, #a8a8a8);
	}
	.brand svg:first-child {
		width: 25px;
		height: 28px;
	}
	.brand .caret path {
		fill: #222;
	}
	.top {
		flex: 1;
		min-width: 0;
	}
	.titlebar {
		display: flex;
		height: 22px;
		box-sizing: border-box;
		border-bottom: 1px solid #333;
		background: #fff;
	}
	.quick,
	.info {
		display: flex;
		align-items: center;
		background: linear-gradient(#666, #858585);
	}
	.quick {
		width: 233px;
		box-sizing: border-box;
		padding-left: 5px;
	}
	.quick .tool {
		width: 22px;
	}
	.quick .tool:last-child {
		width: 16px;
	}
	.quick .drop {
		width: 12px;
	}
	h1 {
		display: flex;
		flex: 1;
		justify-content: center;
		align-items: center;
		gap: 9px;
		margin: 0;
		color: #111;
		font-size: 11px;
		font-weight: 400;
		white-space: nowrap;
	}
	.info {
		width: 418px;
	}
	.fold {
		width: 13px;
		height: 21px;
		background: #555;
	}
	.fold svg {
		width: 4px;
		height: 8px;
	}
	.info input {
		width: 168px;
		height: 20px;
		box-sizing: border-box;
		border: 1px solid #3c3c3c;
		padding: 0 2px;
		background: #757575;
		font-style: italic;
	}
	.info input::placeholder {
		color: #c6c6c6;
	}
	.info .tool {
		width: 24px;
	}
	.info .drop {
		width: 10px;
	}
	.signin {
		gap: 4px;
		width: 106px;
		margin: 0 4px 0 2px;
	}
	.signin .caret {
		margin-left: auto;
	}
	.info i {
		width: 1px;
		height: 20px;
		margin: 0 5px;
		background: #aaa;
	}
	.help b {
		width: 14px;
		height: 14px;
		border-radius: 50%;
		background: #f4f4f4;
		color: #24418c;
		font-size: 12px;
		text-align: center;
	}
	.help {
		width: 22px;
	}
	.window {
		display: flex;
		padding: 0 2px 0 22px;
	}
	.window button {
		width: 43px;
	}
	.window svg {
		width: 12px;
		height: 12px;
		fill: none;
		stroke: #111;
	}
	nav {
		display: flex;
		gap: 1px;
		height: 19px;
		padding-left: 5px;
	}
	nav button {
		padding: 0 8px;
		color: #d2d2d2;
	}
	nav .active {
		padding: 0 9px;
		border: 1px solid #2d2d2d;
		border-bottom: 0;
		background: linear-gradient(#777, #5d5d5d);
		color: #fff;
	}
	nav .collapse {
		gap: 5px;
		padding: 0 20px;
	}
	.collapse svg:first-child {
		width: 13px;
		height: 8px;
	}

	/* ribbon */
	.ribbon {
		display: flex;
		flex: none;
		gap: 2px;
		height: 91px;
		padding: 0 0 1px 2px;
		border-top: 1px solid #383838;
		border-bottom: 1px solid #898989;
		background: linear-gradient(#505050, #3a3a3a);
	}
	.panel {
		display: flex;
		flex-direction: column;
		flex: none;
		box-sizing: border-box;
		border-right: 1px solid #484848;
		background: #5b5b5b;
	}
	.body {
		display: flex;
		flex: 1;
		padding-top: 4px;
	}
	.title {
		display: flex;
		align-items: center;
		height: 17px;
		padding: 0 4px;
		background: #4c4c4c;
	}
	.name {
		flex: 1;
		text-align: center;
		white-space: nowrap;
	}
	.mark {
		width: 8px;
		height: 5px;
		margin-left: 6px;
		vertical-align: 1px;
	}
	.launch {
		width: 7px;
		height: 7px;
	}
	.tool {
		height: 22px;
	}
	.drop {
		height: 22px;
	}
	.big {
		flex-direction: column;
		justify-content: flex-start;
		height: 68px;
		box-sizing: border-box;
		padding-top: 2px;
		line-height: 14px;
		white-space: normal;
	}
	.big > svg:first-child {
		width: 30px;
		height: 30px;
		margin-bottom: 4px;
		flex: none;
	}
	.big .caret {
		margin-top: 2px;
	}
	.stack {
		display: flex;
		flex-direction: column;
		gap: 1px;
	}
	.tools {
		display: grid;
		grid-auto-rows: 22px;
		row-gap: 1px;
	}
	.modeling {
		width: 142px;
	}
	.modeling .big {
		width: 57px;
	}
	.modeling .body {
		padding-left: 4px;
	}
	.modeling .tool {
		width: 20px;
	}
	.mesh {
		width: 71px;
	}
	.mesh .big {
		width: 46px;
	}
	.mesh .tool {
		width: 22px;
	}
	.solid {
		width: 87px;
	}
	.solid .tools {
		grid-template-columns: 26px 26px 22px 10px;
	}
	.draw {
		width: 87px;
	}
	.draw .tools {
		grid-template-columns: 24px 22px 28px 8px;
	}
	.modify {
		width: 133px;
	}
	.modify .tools {
		grid-template-columns: 22px 28px 18px 32px 16px 14px;
	}
	.section {
		width: 69px;
	}
	.section .title {
		padding: 0 3px 0 0;
	}
	.section .big {
		width: 100%;
		padding: 2px 12px 0;
	}
	.coords {
		width: 133px;
	}
	.coords .tools {
		grid-template-columns: 22px 10px 30px 24px 20px 24px;
	}
	.coords .pick {
		grid-column: 3 / 7;
		margin: 1px 0 0 4px;
	}
	.pick {
		display: flex;
		align-items: center;
		height: 18px;
		box-sizing: border-box;
		padding: 0 4px 0 2px;
		border: 1px solid #333;
		background: linear-gradient(#5f5f5f, #4c4c4c);
	}
	.pick select {
		flex: 1;
		min-width: 0;
		padding-left: 2px;
		appearance: none;
	}
	.pick .caret {
		width: 8px;
		height: 5px;
	}
	.pick .icon {
		width: 14px;
		height: 14px;
	}
	.views {
		width: 118px;
	}
	.views .body {
		flex-direction: column;
		gap: 2px;
		padding: 5px 2px 0;
	}
	.views .pick {
		height: 20px;
	}
	.line {
		display: flex;
	}
	.line .tool,
	.line .drop {
		width: 16px;
		height: 22px;
	}
	.selection {
		width: 158px;
	}
	.selection .big {
		width: 60px;
	}
	.selection .big:first-child {
		width: 42px;
		padding-top: 1px;
		border: 1px solid #4a6a9c;
		background: linear-gradient(#6a8dc2, #55719f);
	}
	.selection .big:last-child {
		display: grid;
		grid-template-columns: 6px 1fr 6px;
		grid-template-rows: 34px 28px;
		width: 54px;
		justify-items: center;
	}
	.selection .big:last-child > svg:first-child {
		grid-column: 1 / 4;
	}
	.selection .big:last-child > span {
		grid-column: 2;
	}
	.closed {
		flex-direction: column;
		justify-content: flex-start;
		width: 55px;
		box-sizing: border-box;
		padding: 3px 0 5px;
		border: 1px solid #363636;
		border-top: 0;
		background: linear-gradient(#656565, #505050);
	}
	.closed .pic {
		width: 30px;
		height: 30px;
		margin-bottom: 4px;
	}
	.closed .icon {
		margin-bottom: 3px;
	}
	.closed .caret {
		width: 8px;
		height: 4px;
		margin-top: auto;
	}

	/* drawing tabs */
	.files {
		display: flex;
		align-items: flex-end;
		flex: none;
		height: 24px;
		padding-left: 18px;
		border-bottom: 3px solid #5c5c5c;
		background: #373737;
	}
	.file {
		justify-content: flex-start;
		width: 118px;
		height: 21px;
		padding: 0 12px;
		background: linear-gradient(#606060, #4d4d4d);
		color: #aaa;
		clip-path: polygon(0 100%, 5px 35%, 10px 0, calc(100% - 9px) 0, calc(100% - 3px) 35%, 100% 100%);
	}
	.file.current {
		justify-content: space-between;
		padding: 0 14px 0 10px;
		background: linear-gradient(#858585, #616161);
		color: #fff;
	}
	.file svg {
		width: 8px;
		height: 8px;
	}
	.files .add {
		width: 22px;
		height: 14px;
		margin: 0 0 3px 3px;
		border-radius: 3px 8px 3px 8px;
		background: #555;
	}
	.add svg {
		width: 8px;
		height: 8px;
	}

	/* drawing area */
	main {
		position: relative;
		flex: 1;
		min-height: 0;
		overflow: hidden;
		border-right: 6px solid #a9c8e4;
		background: #212830;
	}
	.model {
		position: absolute;
		inset: 0;
		width: 100%;
		height: 100%;
	}
	.edge {
		fill: none;
		stroke: #d6d9db;
		stroke-width: 1px;
	}
	.halo,
	.glow,
	.core {
		fill: none;
		stroke-linejoin: round;
	}
	.halo {
		stroke: #24448f;
		stroke-width: 5px;
		stroke-opacity: 0.4;
	}
	.glow {
		stroke: #3a68d4;
		stroke-width: 3px;
		stroke-opacity: 0.8;
	}
	.core {
		stroke: #bdd1fc;
		stroke-width: 1px;
	}
	.ucs path {
		fill: none;
		stroke: #d4d4d4;
	}
	.ucs text {
		fill: #d4d4d4;
		font-size: 17px;
		font-weight: 400;
	}
	.overlay {
		position: relative;
		display: flex;
		justify-content: space-between;
		padding: 6px 11px 0 3px;
	}
	.viewlabel {
		display: flex;
	}
	.mdi {
		display: flex;
		gap: 9px;
	}
	.mdi svg {
		width: 10px;
		height: 10px;
		fill: none;
		stroke: #e6ebf2;
	}
	.compass {
		position: absolute;
		top: 61px;
		right: 13px;
		display: flex;
		flex-direction: column;
		align-items: center;
		gap: 24px;
	}
	.compass > svg {
		width: 92px;
		height: 56px;
	}
	.compass text {
		fill: #222;
		font-size: 7px;
		font-weight: 700;
	}
	.compass .side {
		font-size: 7px;
	}
	.compass button {
		gap: 7px;
		width: 63px;
		height: 15px;
		border-radius: 3px;
		background: #9799a0;
		color: #4b4e55;
		font-size: 10px;
	}
	.compass button svg {
		width: 7px;
		height: 5px;
	}
	.pointer {
		position: absolute;
		top: 21px;
		left: 896px;
		width: 12px;
		height: 18px;
	}

	/* layout tabs and status bar */
	footer {
		display: flex;
		justify-content: space-between;
		flex: none;
		height: 24px;
		border-top: 1px solid #4d4d4d;
		background: #373737;
	}
	.layouts {
		display: flex;
		padding-left: 8px;
	}
	.sheet {
		height: 16px;
		width: 59px;
		background: #515151;
		color: #bbb;
		clip-path: polygon(0 0, 100% 0, calc(100% - 6px) 90%, calc(100% - 9px) 100%, 9px 100%, 6px 90%);
	}
	.sheet.current {
		background: linear-gradient(#666, #8b8b8b);
		color: #fff;
		font-weight: 700;
	}
	.layouts .add {
		width: 20px;
		height: 15px;
		margin-left: 6px;
		border-radius: 3px 3px 8px 8px;
		background: #505050;
	}
	.status {
		display: flex;
		background: #484848;
	}
	.mode,
	.group {
		display: flex;
		align-items: center;
		border: 1px solid #6d6d6d;
		border-left-color: #5c5c5c;
		color: #f0f0f0;
	}
	.mode {
		width: 44px;
	}
	.group .tool {
		width: 22px;
	}
	.group .drop {
		width: 15px;
	}
	.group .caret {
		width: 7px;
		height: 5px;
	}
	.group:last-child {
		gap: 2px;
	}
	.ratio {
		width: 20px;
		font-weight: 600;
	}
</style>
